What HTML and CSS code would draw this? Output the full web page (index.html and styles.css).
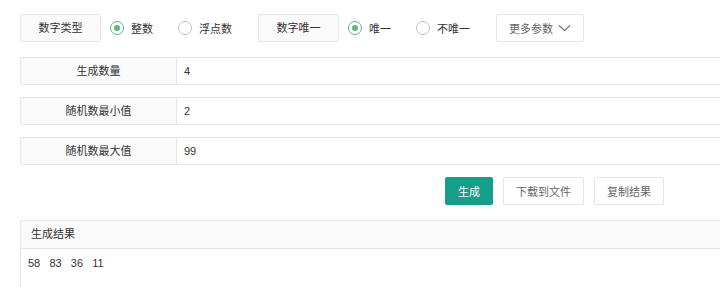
FILE: index.html
```html
<!DOCTYPE html>
<html lang="zh-CN">
<head>
    <meta charset="UTF-8">
    <title>随机数生成器</title>
    <link rel="stylesheet" href="styles.css">
</head>
<body>
    <div class="page">
        <div class="toolbar">
            <div class="tag">数字类型</div>
            <label class="radio checked"><span class="dot"></span>整数</label>
            <label class="radio"><span class="dot"></span>浮点数</label>
            <div class="tag">数字唯一</div>
            <label class="radio checked"><span class="dot"></span>唯一</label>
            <label class="radio"><span class="dot"></span>不唯一</label>
            <div class="more">更多参数
                <svg width="13" height="8" viewBox="0 0 13 8"><path d="M1 1.5 L6.5 6.5 L12 1.5" fill="none" stroke="#777" stroke-width="1.2"/></svg>
            </div>
        </div>

        <div class="field">
            <div class="field-label">生成数量</div>
            <div class="field-value">4</div>
        </div>
        <div class="field">
            <div class="field-label">随机数最小值</div>
            <div class="field-value">2</div>
        </div>
        <div class="field">
            <div class="field-label">随机数最大值</div>
            <div class="field-value">99</div>
        </div>

        <div class="actions">
            <button class="btn btn-primary">生成</button>
            <button class="btn btn-download">下载到文件</button>
            <button class="btn btn-copy">复制结果</button>
        </div>

        <div class="result">
            <div class="result-head">生成结果</div>
            <div class="result-body">58&nbsp;&nbsp;&nbsp;83&nbsp;&nbsp;&nbsp;36&nbsp;&nbsp;&nbsp;11</div>
        </div>
    </div>
</body>
</html>
```
FILE: styles.css
```css
:root {
    --border: #e6e6e6; --label-bg: #fafafa; --text: #333; --muted: #666;
    --green: #5fb878; --primary: #179e88;
}
body { margin: 0; overflow: hidden; font-family: "Liberation Sans", "Noto Sans CJK SC", sans-serif; font-size: 11px; color: var(--text); background: #fff; }
.page { width: 820px; padding: 14px 0 0 20px; }

.toolbar { display: flex; align-items: center; height: 28px; }
.tag { width: 79px; height: 26px; line-height: 26px; text-align: center; border: 1px solid var(--border); background: var(--label-bg); border-radius: 2px; margin-right: 9px; }
.radio { display: flex; align-items: center; gap: 7px; margin-right: 25px; }
.radio + .tag { margin-left: 1px; }
.radio .dot { width: 12px; height: 12px; border: 1px solid #c2c2c2; border-radius: 50%; position: relative; }
.radio.checked .dot { border-color: var(--green); }
.radio.checked .dot::after { content: ""; position: absolute; left: 3px; top: 3px; width: 6px; height: 6px; border-radius: 50%; background: var(--green); }
.more { width: 86px; height: 26px; margin-left: 1px; border: 1px solid var(--border); border-radius: 2px; color: var(--muted); display: flex; align-items: center; justify-content: center; gap: 5px; }

.field { display: flex; height: 26px; border: 1px solid var(--border); border-radius: 2px; margin-top: 15px; }
.field + .field { margin-top: 12px; }
.field-label { width: 155px; background: var(--label-bg); border-right: 1px solid var(--border); text-align: center; line-height: 26px; }
.field-value { flex: 1; line-height: 26px; padding-left: 7px; }

.actions { display: flex; gap: 10px; margin-top: 12px; padding-left: 425px; }
.btn { height: 28px; padding: 0; border: 1px solid var(--border); background: #fff; color: var(--muted); font: inherit; border-radius: 2px; }
.btn-primary { width: 48px; background: var(--primary); border-color: var(--primary); color: #fff; }
.btn-download { width: 81px; }
.btn-copy { width: 70px; }

.result { margin-top: 15px; border: 1px solid var(--border); border-bottom: none; }
.result-head { height: 27px; line-height: 27px; padding-left: 10px; background: var(--label-bg); border-bottom: 1px solid var(--border); }
.result-body { padding: 6px 7px; line-height: 16px; height: 40px; }
```
